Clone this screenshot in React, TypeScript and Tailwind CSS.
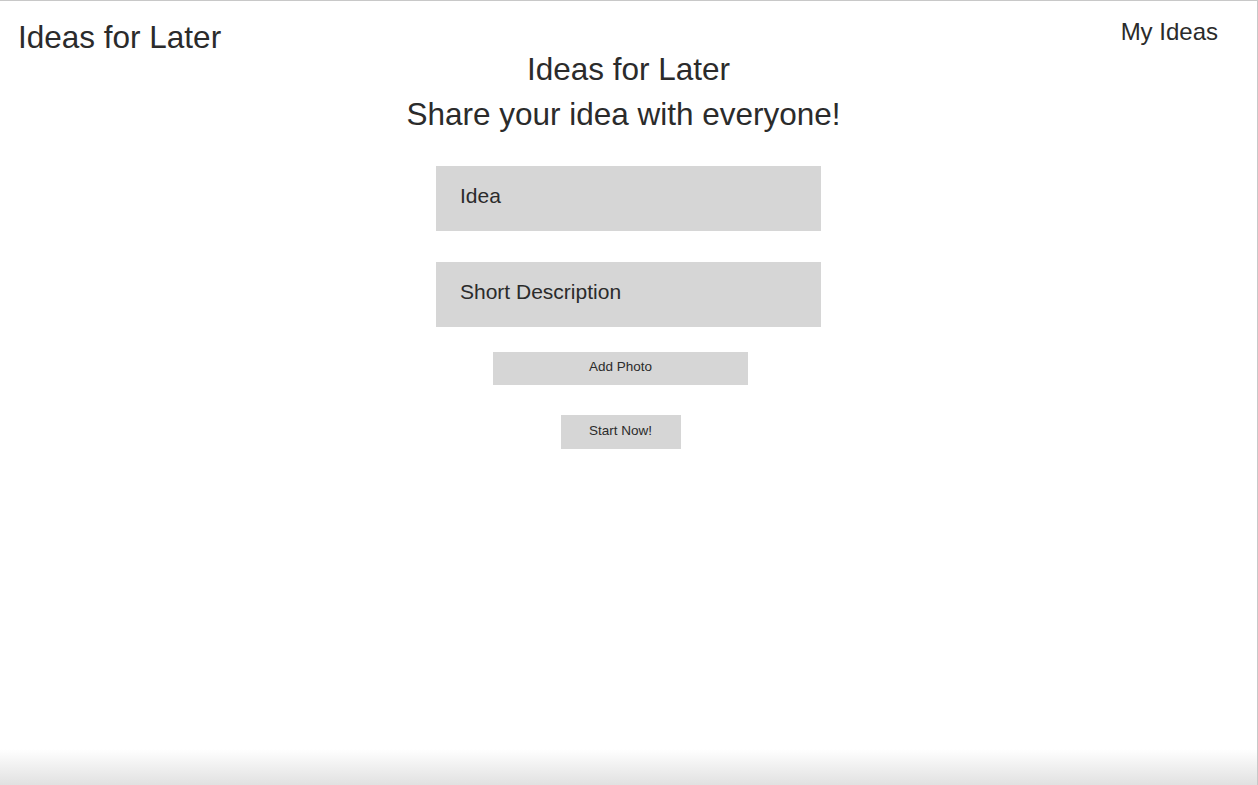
export default function App() {
  return (
    <div
      className="w-[1258px] h-[785px] flex flex-col bg-white border-t border-r border-[#c8c8c8] text-[#2b2b2b] overflow-hidden"
      style={{ fontFamily: '"Liberation Sans", Arial, sans-serif' }}
    >
      <header className="h-[45px] flex justify-between items-start">
        <div className="pl-[18px] pt-[18px] text-[31.5px] leading-[37px]">Ideas for Later</div>
        <div className="pr-[39px] pt-[17px] text-[24px] leading-[28px]">My Ideas</div>
      </header>
      <main className="flex flex-col items-center">
        <h1 className="text-[31.5px] leading-[46px]">Ideas for Later</h1>
        <h2 className="text-[31.5px] leading-[45px] mr-[10px]">Share your idea with everyone!</h2>
        <div className="mt-[29px] flex flex-col gap-[31px]">
          <div className="w-[385px] h-[65px] bg-[#d6d6d6] pl-[24px] pt-[18px] text-[21px] leading-[24px]">Idea</div>
          <div className="w-[385px] h-[65px] bg-[#d6d6d6] pl-[24px] pt-[18px] text-[21px] leading-[24px]">
            Short Description
          </div>
        </div>
        <button className="mt-[25px] mr-[16px] w-[255px] h-[33px] bg-[#d6d6d6] flex justify-center pt-[7px] text-[13.5px] leading-[15px]">
          Add Photo
        </button>
        <button className="mt-[30px] mr-[16px] w-[120px] h-[34px] bg-[#d6d6d6] flex justify-center pt-[8px] text-[13.5px] leading-[15px]">
          Start Now!
        </button>
      </main>
      <div className="flex-1" />
      <div className="h-[36px] bg-linear-to-b from-white to-[#e1e1e1]" />
    </div>
  );
}
